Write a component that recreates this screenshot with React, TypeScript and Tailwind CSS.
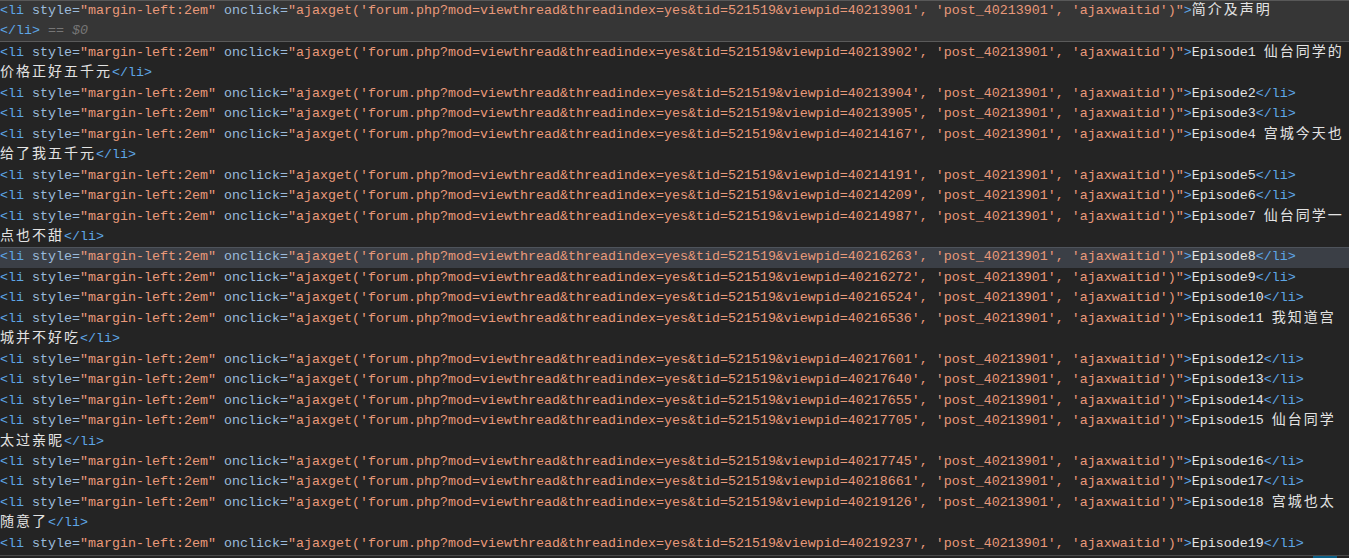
import React from 'react';

type Row = { pid: string; text: string };

const ROWS: Row[] = [
  { pid: '40213902', text: 'Episode1 仙台同学的价格正好五千元' },
  { pid: '40213904', text: 'Episode2' },
  { pid: '40213905', text: 'Episode3' },
  { pid: '40214167', text: 'Episode4 宫城今天也给了我五千元' },
  { pid: '40214191', text: 'Episode5' },
  { pid: '40214209', text: 'Episode6' },
  { pid: '40214987', text: 'Episode7 仙台同学一点也不甜' },
  { pid: '40216263', text: 'Episode8' },
  { pid: '40216272', text: 'Episode9' },
  { pid: '40216524', text: 'Episode10' },
  { pid: '40216536', text: 'Episode11 我知道宫城并不好吃' },
  { pid: '40217601', text: 'Episode12' },
  { pid: '40217640', text: 'Episode13' },
  { pid: '40217655', text: 'Episode14' },
  { pid: '40217705', text: 'Episode15 仙台同学太过亲昵' },
  { pid: '40217745', text: 'Episode16' },
  { pid: '40218661', text: 'Episode17' },
  { pid: '40219126', text: 'Episode18 宫城也太随意了' },
  { pid: '40219237', text: 'Episode19' },
];

// CJK glyphs take two columns in the reference's monospace font
const Content = ({ text }: { text: string }) => (
  <>
    {text.split(/([\u4e00-\u9fff]+)/).map((part, i) =>
      /[\u4e00-\u9fff]/.test(part) ? (
        <span key={i} className="text-[14px] leading-[10px] tracking-[2px] font-['Noto_Sans_CJK_SC',sans-serif]">
          {part}
        </span>
      ) : (
        <span key={i}>{part}</span>
      )
    )}
  </>
);

const OpenTag = ({ pid }: { pid: string }) => (
  <>
    <span className="text-[#5ea6e6]">&lt;li</span>{' '}
    <span className="text-[#9bbbdc]">style=</span>
    <span className="text-[#e9997a]">"margin-left:2em"</span>{' '}
    <span className="text-[#9bbbdc]">onclick=</span>
    <span className="text-[#e9997a]">
      "ajaxget('forum.php?mod=viewthread&amp;threadindex=yes&amp;tid=521519&amp;viewpid={pid}', 'post_40213901', 'ajaxwaitid')"
    </span>
    <span className="text-[#5ea6e6]">&gt;</span>
  </>
);

const CloseTag = () => <span className="text-[#5ea6e6]">&lt;/li&gt;</span>;

export default function App() {
  return (
    <div className="h-[558px] w-full overflow-hidden bg-[#242424] flex flex-col font-['Liberation_Mono',monospace] text-[13.333px] leading-[20.46px] text-[#e3e3e3]">
      <div className="pt-px bg-[#363636] shadow-[inset_0_1px_0_#585858,inset_0_-1px_0_#5a5a5a] whitespace-pre-wrap">
        <div>
          <OpenTag pid="40213901" />
          <Content text="简介及声明" />
        </div>
        <div>
          <CloseTag />
          <span className="italic text-[#767676]"> == $0</span>
        </div>
      </div>

      <ul className="pt-px whitespace-pre-wrap">
        {ROWS.map(row => (
          <li
            key={row.pid}
            className={
              row.pid === '40216263'
                ? 'bg-[#3b3f46] shadow-[inset_0_1px_0_#4e535b]'
                : ''
            }
          >
            <OpenTag pid={row.pid} />
            <Content text={row.text} />
            <CloseTag />
          </li>
        ))}
      </ul>

      <div className="mt-auto h-[3px] shrink-0 border-t border-[#4a4a4a] flex">
        <div className="ml-[1313px] w-[24px] bg-[#0b5f86]"></div>
      </div>
    </div>
  );
}
